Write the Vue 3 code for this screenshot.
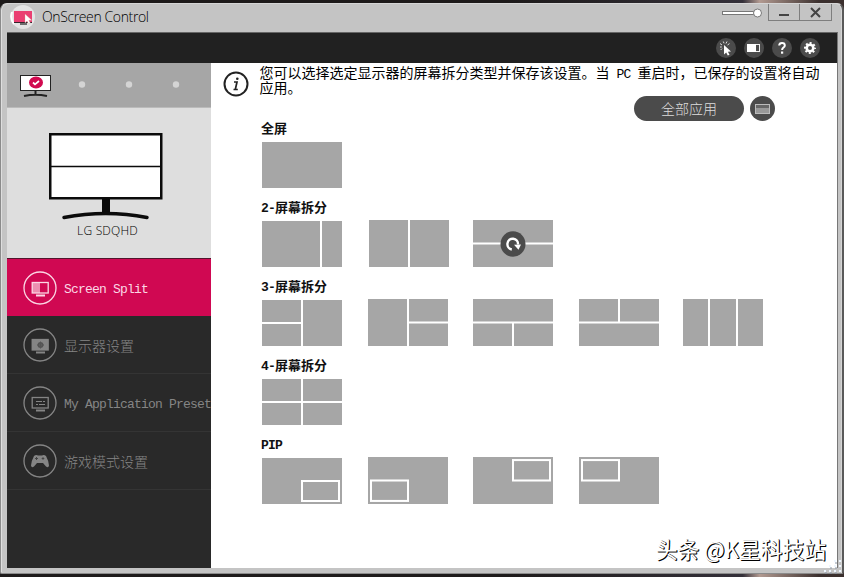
<template>
  <div class="desktop">
    <div class="window">
      <header class="titlebar">
        <svg class="logo" width="26" height="24" viewBox="0 0 26 24">
          <circle cx="13" cy="12" r="12" fill="#e4e4e4" />
          <path d="M4 19A12 12 0 0 1 2 7" fill="none" stroke="#fff" stroke-width="2" />
          <rect x="4" y="6" width="18" height="12" fill="#35252c" />
          <rect x="4" y="6" width="18" height="11" fill="#ea3f72" />
          <path d="M10 19h7" stroke="#444" stroke-width="1.5" />
          <path d="M15 9v9l2-2 1.5 3 1.8-1-1.5-2.8h3z" fill="#fff" stroke="#c98" stroke-width=".3" />
        </svg>
        <span class="title">OnScreen Control</span>
        <svg class="slider" width="40" height="12" viewBox="0 0 40 12">
          <rect x=".5" y="4.500" width="32" height="3" fill="#fff" stroke="#777" />
          <circle cx="35.500" cy="6" r="4" fill="#fff" stroke="#777" />
        </svg>
        <div class="controls">
          <span class="control"><svg width="30" height="17"><path d="M10 11h10" stroke="#444" stroke-width="2" /></svg></span>
          <span class="control"><svg width="31" height="17"><path d="M11 4l9 9M20 4l-9 9" stroke="#444" stroke-width="2" /></svg></span>
        </div>
      </header>

      <div class="content">
        <nav class="toolbar">
          <svg width="20" height="20" viewBox="0 0 20 20">
            <circle cx="10" cy="10" r="10" fill="#4b4b4b" />
            <path d="M8 7l7 6.400-3.100.3 1.600 3-1.700.9-1.600-3.200L8 16.400z" fill="#fff" />
            <path d="M6 7L4 5.500M8 5.300L7.300 3.500M5.800 9H4M10 5.500l1-2M11.500 7l2-1.400M6 10.600L4.600 12" stroke="#ddd" stroke-width="1" />
          </svg>
          <svg width="20" height="20" viewBox="0 0 20 20">
            <circle cx="10" cy="10" r="10" fill="#4b4b4b" />
            <rect x="3.500" y="6.500" width="12" height="7" fill="#4b4b4b" stroke="#eee" />
            <rect x="3" y="6" width="9" height="8" fill="#fff" />
          </svg>
          <svg width="20" height="20" viewBox="0 0 20 20">
            <circle cx="10" cy="10" r="10" fill="#4b4b4b" />
            <path d="M7.200 7.500C7.300 5.400 8.700 5 10 5c1.700 0 2.800.9 2.800 2.400 0 2.200-2.700 2.200-2.700 4.500" fill="none" stroke="#fff" stroke-width="2" />
            <rect x="9" y="13.500" width="2.200" height="2.200" fill="#fff" />
          </svg>
          <svg width="20" height="20" viewBox="0 0 20 20">
            <circle cx="10" cy="10" r="10" fill="#4b4b4b" />
            <circle cx="10" cy="10" r="3.300" fill="none" stroke="#fff" stroke-width="2.600" />
            <circle cx="10" cy="10" r="5" fill="none" stroke="#fff" stroke-width="2" stroke-dasharray="1.960 1.967" stroke-dashoffset=".98" />
          </svg>
        </nav>

        <div class="body">
          <aside class="sidebar">
            <div class="tabs">
              <svg width="204" height="44" viewBox="0 0 204 44">
                <rect x="13.500" y="12.500" width="30" height="15" fill="#fff" stroke="#222" />
                <path d="M28.500 28v4M17 33q11.500-2.500 23 0" fill="none" stroke="#222" stroke-width="2" />
                <ellipse cx="29" cy="19.500" rx="7" ry="6" fill="#d1094f" />
                <path d="M26 19.500l2 1.800 4-3.300" fill="none" stroke="#fff" stroke-width="1.700" />
                <circle v-for="x in [75, 122, 169]" :key="x" :cx="x" cy="21.500" r="3.200" fill="#d4d4d4" />
              </svg>
            </div>

            <div class="monitor">
              <svg width="114" height="88" viewBox="0 0 114 88">
                <rect x="1.250" y="1.250" width="111" height="64" fill="#fff" stroke="#0b0b0b" stroke-width="2.500" />
                <path d="M2 33.500h110" stroke="#0b0b0b" stroke-width="1.500" />
                <rect x="53" y="65" width="8" height="16" fill="#0b0b0b" />
                <path d="M15 84.500Q57 76.500 98 84.500" fill="none" stroke="#0b0b0b" stroke-width="3.500" stroke-linecap="round" />
              </svg>
              <span class="model">LG SDQHD</span>
            </div>

            <ul class="menu">
              <li v-for="item in menu" :key="item.icon" class="item" :class="{ active: item.active }">
                <svg class="item-icon" width="34" height="34" viewBox="0 0 34 34" fill="none" stroke="currentColor">
                  <circle cx="17" cy="17" r="16" stroke-width="1.300" />
                  <template v-if="item.icon !== 'game'">
                    <rect x="9.200" y="11.500" width="16" height="10.500" stroke-width="1.300" />
                    <path d="M13 24.500h9" stroke-width="2" />
                  </template>
                  <rect v-if="item.icon === 'split'" x="9" y="12" width="8" height="10" fill="currentColor" stroke="none" opacity=".65" />
                  <template v-if="item.icon === 'display'">
                    <rect x="9" y="12" width="16" height="10" fill="currentColor" stroke="none" />
                    <circle cx="17.500" cy="17" r="2" stroke="#555" stroke-width="1.800" />
                    <path d="M17.500 13.500v7M14 17h7" stroke="#555" />
                  </template>
                  <path v-if="item.icon === 'preset'" d="M13 15.500h6M20 15.500h2M13 18.500h2M16 18.500h6" />
                  <template v-if="item.icon === 'game'">
                    <path d="M11 12q2-1.500 4-.5h4q2-1 4 .5 2.500 4.500 3 9.500-.5 3-3 1l-3-3.500h-6l-3 3.500q-2.500 2-3-1 .5-5 3-9.500z" fill="currentColor" stroke="none" />
                    <path d="M13.500 13v3M12 14.500h3M20 13.200v2.600M18.700 14.500h2.600" stroke="#444" />
                  </template>
                </svg>
                <span>{{ item.label }}</span>
              </li>
            </ul>
          </aside>

          <main class="main">
            <div class="notice">
              <svg class="info" width="26" height="26" viewBox="0 0 26 26">
                <circle cx="13" cy="13" r="11.500" fill="none" stroke="#222" stroke-width="2" />
                <path d="M11 11h3l-1.700 7.500h2.500M10.500 18.500h2" fill="none" stroke="#222" stroke-width="1.700" />
                <circle cx="14.300" cy="7.800" r="1.300" fill="#222" />
              </svg>
              <div class="message">
                <p>您可以选择选定显示器的屏幕拆分类型并保存该设置。当<span class="latin"> PC </span>重启时，已保存的设置将自动</p>
                <p>应用。</p>
              </div>
            </div>

            <div class="actions">
              <button class="apply">全部应用</button>
              <svg width="25" height="25" viewBox="0 0 25 25">
                <circle cx="12.500" cy="12.500" r="12.500" fill="#4b4b4b" />
                <rect x="5.500" y="8.500" width="14" height="9" fill="#666" stroke="#bbb" />
                <rect x="6" y="12" width="13" height="5" fill="#999" />
              </svg>
            </div>

            <section v-for="(group, g) in groups" :key="g" class="group">
              <h2 class="group-name"><span class="latin">{{ group.prefix }}</span>{{ group.name }}</h2>
              <div class="layouts">
                <svg
                  v-for="(layout, i) in group.layouts"
                  :key="i"
                  class="layout"
                  :class="{ lower: i === 0, nudged: layout.nudged }"
                  width="80"
                  :height="i === 0 ? 46 : 47"
                  viewBox="0 0 80 46"
                  preserveAspectRatio="none"
                >
                  <rect width="80" height="46" fill="#a6a6a6" />
                  <path v-if="layout.lines" :d="layout.lines" fill="none" stroke="#fff" stroke-width="2" />
                  <rect v-if="layout.pip" :x="layout.pip[0]" :y="layout.pip[1]" width="37" height="20" fill="none" stroke="#fff" stroke-width="2" />
                  <g v-if="layout.current">
                    <circle cx="40" cy="23.500" r="12.500" fill="#4b4b4b" />
                    <path d="M38.800 28.800A5.300 5.300 0 1 1 45 24" fill="none" stroke="#fff" stroke-width="2.400" />
                    <path d="M41 24.300l7-.3-2.500 5z" fill="#fff" />
                  </g>
                </svg>
              </div>
            </section>
          </main>
        </div>
      </div>
    </div>
    <div class="watermark">头条 @K星科技站</div>
    <svg class="grip" width="20" height="18" viewBox="0 0 20 18">
      <path d="M2 14h2M7 14h2M12 14h2M17 14h2M7 9h2M12 9h2M17 9h2M12 4h2M17 4h2" stroke="#eef6ff" stroke-width="2" />
      <path d="M3 16h2M8 16h2M13 16h2M8 11h2M13 11h2M13 6h2" stroke="#8c98a8" stroke-width="1" />
    </svg>
  </div>
</template>

<script setup>
const menu = [
  { icon: 'split', label: 'Screen Split', active: true },
  { icon: 'display', label: '显示器设置' },
  { icon: 'preset', label: 'My Application Preset' },
  { icon: 'game', label: '游戏模式设置' },
]

// Dividers are drawn in the 80x46 box of a thumbnail
const groups = [
  { name: '全屏', layouts: [{}] },
  {
    prefix: '2-',
    name: '屏幕拆分',
    layouts: [
      { lines: 'M59 0v46' },
      { lines: 'M40 0v46', nudged: true },
      { lines: 'M0 23h80', current: true },
    ],
  },
  {
    prefix: '3-',
    name: '屏幕拆分',
    layouts: [
      { lines: 'M40 0v46M0 23h40' },
      { lines: 'M40 0v46M40 23h40' },
      { lines: 'M0 23h80M40 23v23' },
      { lines: 'M0 23h80M40 0v23' },
      { lines: 'M26 0v46M54 0v46' },
    ],
  },
  { prefix: '4-', name: '屏幕拆分', layouts: [{ lines: 'M40 0v46M0 23h80' }] },
  {
    prefix: 'PIP',
    layouts: [{ pip: [40, 23] }, { pip: [3, 23] }, { pip: [40, 3] }, { pip: [3, 3] }],
  },
]
</script>

<style>
body {
  margin: 0;
  background: #1d191b;
}
</style>

<style scoped>
.desktop {
  position: relative;
  box-sizing: border-box;
  width: 844px;
  height: 577px;
  padding: 3px 0;
  overflow: hidden;
  background: linear-gradient(90deg, #1d1a1a 60%, #343039 88%, #b29a91 90%, #3b302e 97%);
  font-family: 'Liberation Mono', 'Noto Sans CJK SC', monospace;
}

.window {
  box-sizing: border-box;
  width: 844px;
  height: 571px;
  padding: 0 4px 5px 6px;
  border: 1px solid #8b8b8b;
  border-top-color: #d5d5d5;
  border-right: 2px solid #5a5a5a;
  border-radius: 7px 7px 2px 2px;
  background: #c4c4c4;
  box-shadow: inset 1px 0 #dedede, inset -1px 0 #d6d6d6;
}

.titlebar {
  display: flex;
  align-items: flex-start;
  height: 28px;
}

.logo {
  margin: 1px 0 0 3px;
}

.title {
  margin: 3px 0 0 6px;
  font: 300 14px/20px 'Open Sans', sans-serif;
  letter-spacing: -0.38px;
  color: #000;
  white-space: nowrap;
}

.slider {
  margin: 3px 6px 0 auto;
}

.controls {
  display: flex;
  margin-right: 6px;
}

.control {
  height: 16px;
  border: 1px solid #7e7e7e;
  border-top: 0;
  overflow: hidden;
}

.control + .control {
  border-left: 0;
}

.control svg {
  display: block;
}

.content {
  height: 536px;
  box-sizing: border-box;
  border-top: 1px solid #666;
  border-right: 1px solid #777;
  background: #fff;
}

.toolbar {
  display: flex;
  align-items: center;
  justify-content: flex-end;
  gap: 8px;
  height: 30px;
  padding-right: 17px;
  background: #212121;
}

.body {
  display: flex;
  height: 505px;
}

.sidebar {
  width: 204px;
  flex: none;
  overflow: hidden;
  background: #292929;
}

.tabs {
  height: 44px;
  border-bottom: 1px solid #bbb;
  background: #a6a6a6;
}

.monitor {
  display: flex;
  flex-direction: column;
  align-items: center;
  box-sizing: border-box;
  height: 150px;
  padding: 25px 7px 0 0;
  background: #dedede;
}

.monitor svg {
  flex: none;
}

.model {
  margin: 1px 0 0 4px;
  font: 300 12px/18px 'Open Sans', sans-serif;
  letter-spacing: 0.2px;
  color: #000;
}

.menu {
  margin: 0;
  padding: 0;
  list-style: none;
}

.item {
  display: flex;
  align-items: center;
  gap: 7px;
  box-sizing: border-box;
  height: 58px;
  padding-left: 16px;
  border-bottom: 1px solid #343434;
  color: #858585;
  white-space: nowrap;
}

.item span {
  padding-top: 4px;
  font: 13px/16px 'Liberation Mono', monospace;
  letter-spacing: -0.8px;
}

.item:nth-child(even) span {
  padding-top: 0;
  font: 300 14px/20px 'Noto Sans CJK SC', sans-serif;
  letter-spacing: 0;
}

.item.active {
  border-top: 1px solid #51152c;
  border-bottom: 0;
  background: #d00852;
  color: #fbd7e4;
}

.item-icon {
  flex: none;
}

.main {
  flex: 1;
}

.notice {
  display: flex;
  height: 33px;
  padding-left: 12px;
}

.info {
  margin: 8px 11px 0 0;
}

.message {
  margin-top: 2px;
  font: 400 14px/15px 'Noto Sans CJK SC', sans-serif;
  color: #000;
  white-space: nowrap;
}

.message p {
  height: 15px;
  margin: 0 0 0 -0.5px;
}

.latin {
  font-family: 'Liberation Mono', monospace;
  font-size: 13px;
  line-height: 1;
  letter-spacing: -0.8px;
}

.actions {
  display: flex;
  gap: 6px;
  height: 25px;
  padding-left: 423px;
}

.apply {
  width: 110px;
  height: 25px;
  padding: 0;
  border: 0;
  border-radius: 13px;
  background: #4b4b4b;
  color: #ddd;
  font: 300 14px/25px 'Noto Sans CJK SC', sans-serif;
}

.group {
  height: 79px;
  padding-left: 50px;
}

.group-name {
  height: 20px;
  margin: 0;
  font: 700 13px/14px 'Noto Sans CJK SC', sans-serif;
  color: #111;
}

.layouts {
  display: grid;
  grid-template-columns: 106px 105px 106px 104px 80px;
  align-items: start;
  height: 47px;
  padding-left: 1px;
}

.layout {
  display: block;
}

.lower {
  margin-top: 1px;
}

.nudged {
  margin-left: 1px;
}

/* Signature and resize grip lie over the window frame */
.watermark {
  position: absolute;
  right: 18px;
  bottom: 13px;
  font: 400 21.800px/30px 'Noto Sans CJK SC', sans-serif;
  color: #fff;
  text-shadow: 1px 1px 0 #000, 1px 0 0 #222;
  white-space: nowrap;
}

.grip {
  position: absolute;
  right: 2px;
  bottom: 2px;
}
</style>
